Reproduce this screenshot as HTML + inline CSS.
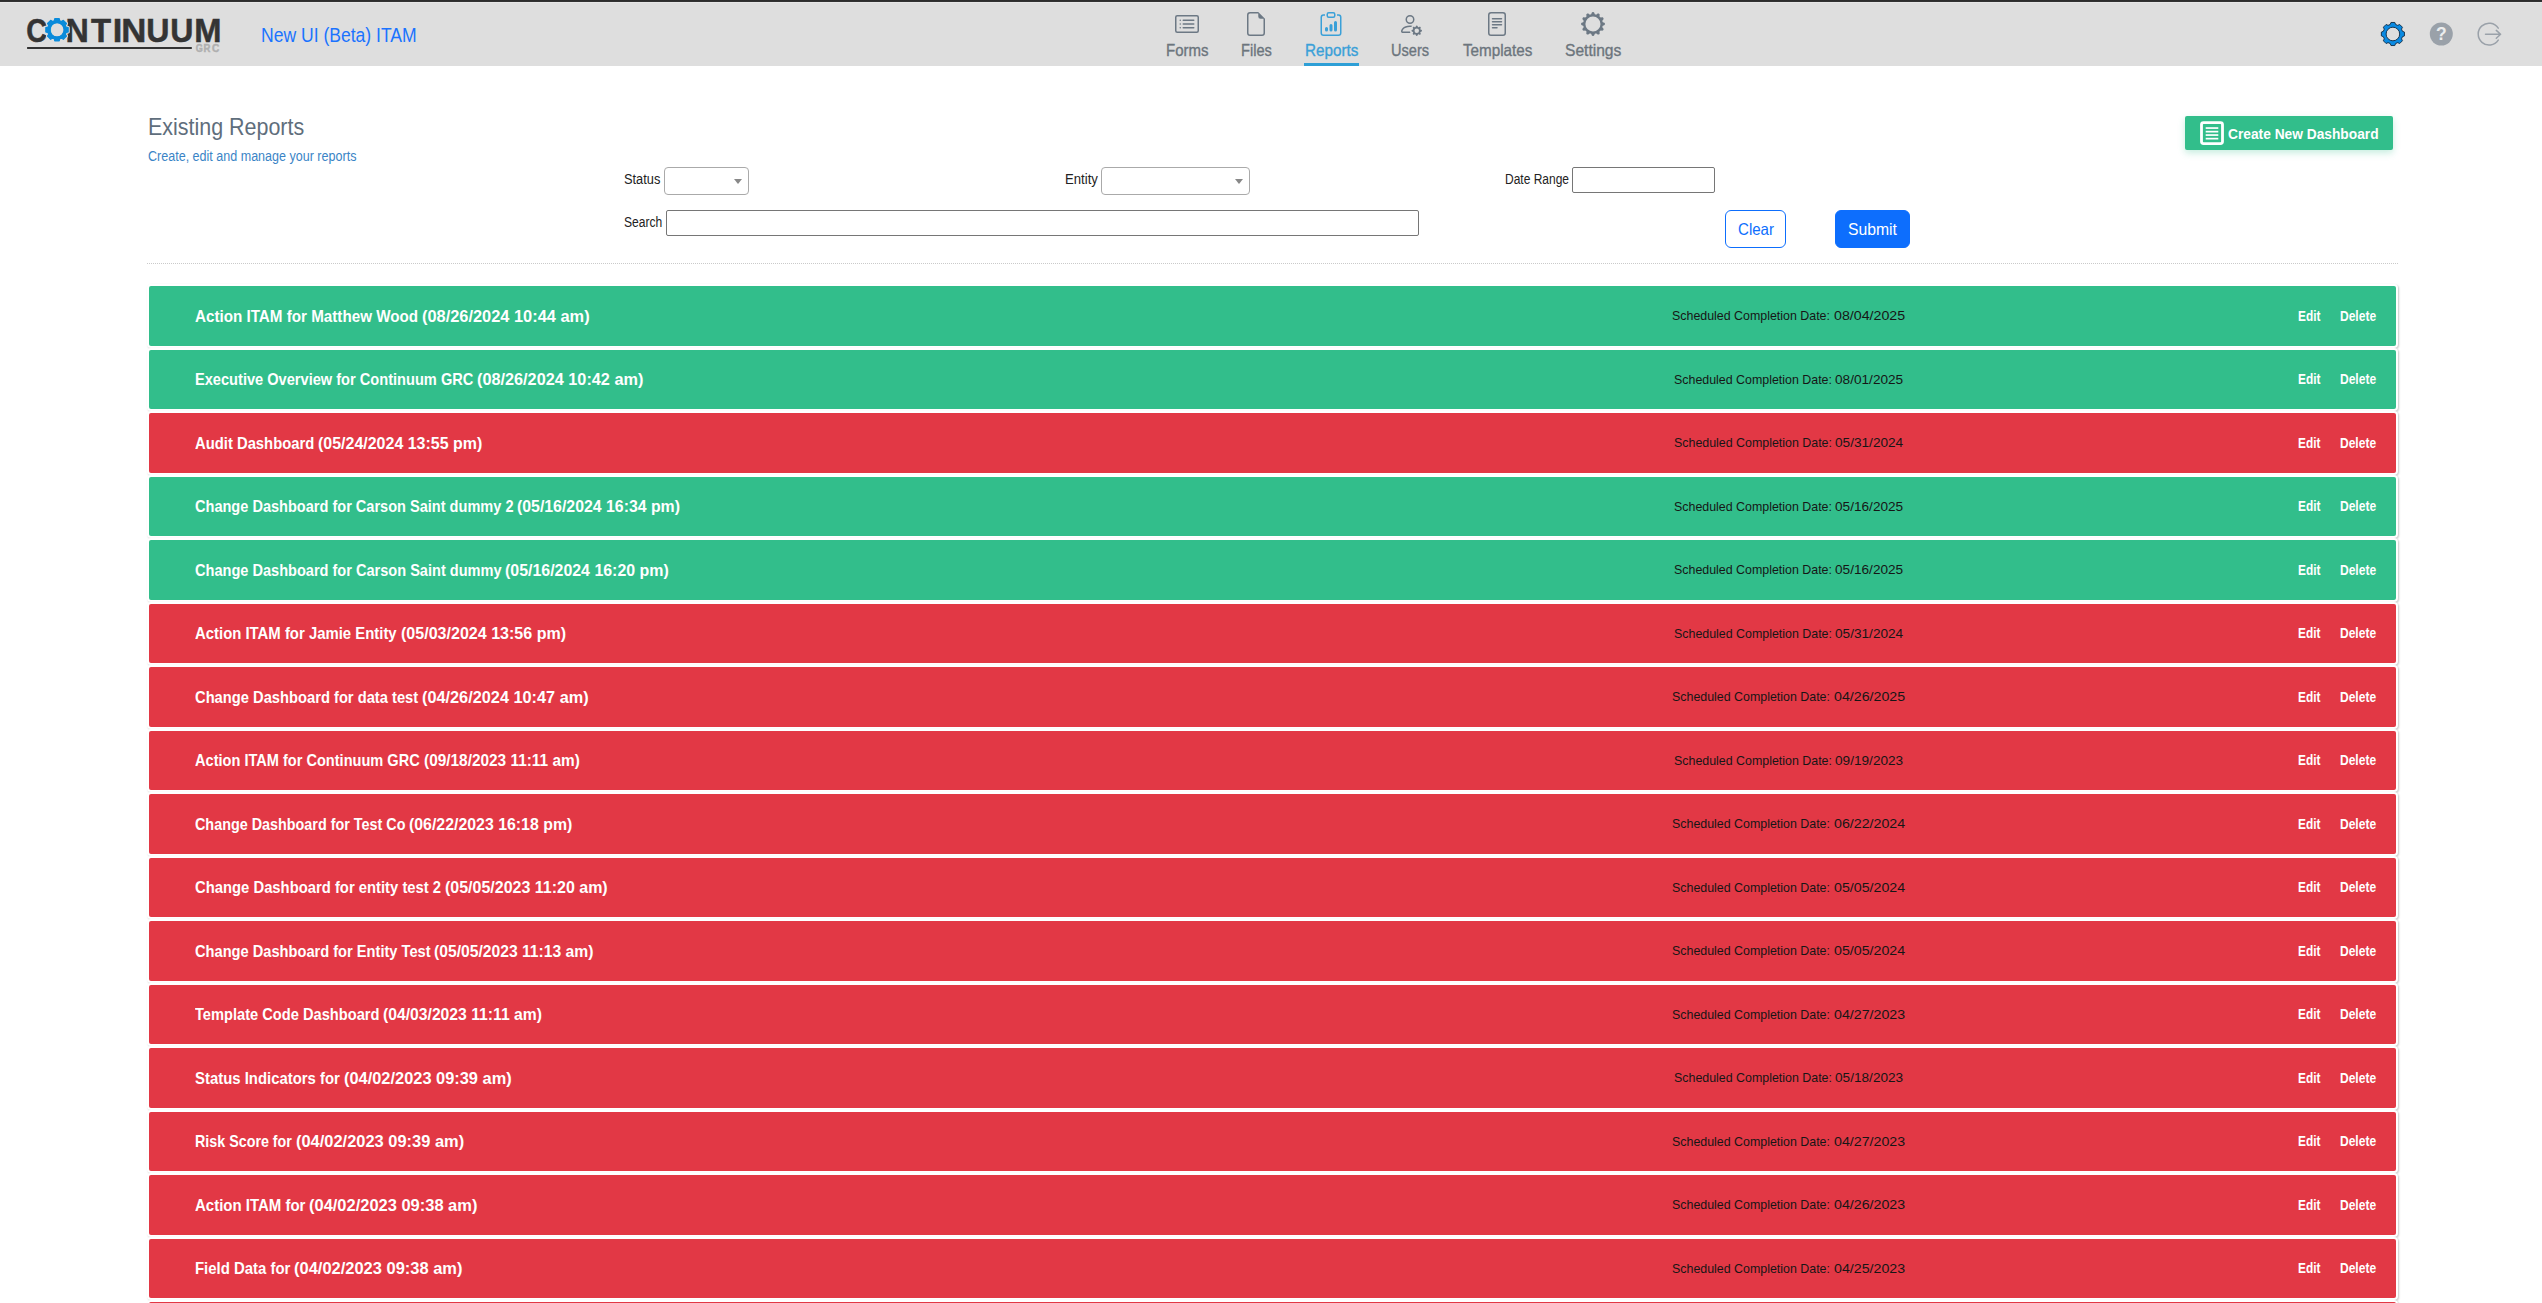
<!DOCTYPE html><html lang="en"><head><meta charset="utf-8"><title>Existing Reports</title><style>
*{box-sizing:border-box;margin:0;padding:0}
html,body{width:2542px;height:1303px;overflow:hidden;background:#fff}
body{font-family:"Liberation Sans",sans-serif;position:relative;color:#212529}
.abs{position:absolute;white-space:nowrap}
.f{position:absolute;white-space:pre;display:block;transform-origin:0 50%;margin:0;font-style:normal}
#topbar{left:0;top:0;width:2542px;height:2px;background:linear-gradient(#2a2a2a,#343434)}
#header{left:0;top:2px;width:2542px;height:64px;background:#dedede;box-shadow:inset 0 1px 0 #e6e6e6}
#main{left:0;top:66px;width:2542px;height:1237px}
.navico{top:10px;width:24px;height:24px;fill:#6c7884}
.sel{border:1px solid #aaa;border-radius:4px;background:#fff}
.sel:after{content:"";position:absolute;right:6px;top:11px;border:4px solid transparent;border-top:5px solid #888;border-bottom:0}
.inp{border:1px solid #767676;border-radius:2px;background:#fff}
.btn{border-radius:6px;border:1px solid #0d6efd}
#clear{left:1725px;top:144px;width:61px;height:38px;background:#fff}
#submit{left:1835px;top:144px;width:75px;height:38px;background:#0d6efd}
#create{left:2185px;top:50px;width:208px;height:34px;background:#32be8b;border-radius:2px;box-shadow:0 3px 7px rgba(50,190,139,.28)}
#dots{left:147px;top:197px;width:2251px;height:0;border-top:1px dotted #cacaca}
.card{left:147px;width:2251px;height:63.5px;border-radius:4px;background:#fff;box-shadow:1px 1px 2px rgba(0,0,0,.22)}
.row{left:149px;width:2247px;height:59.5px;border-radius:2px}
.g{background:#32be8b}
.r{background:#e23845}
</style></head><body>
<div id="topbar" class="abs"></div>
<header id="header" class="abs">
<svg class="abs" style="left:20px;top:3px" width="220" height="60" viewBox="0 0 220 60" font-family="'Liberation Sans',sans-serif" font-weight="700" role="img" aria-label="CONTINUUM GRC"><title>CONTINUUM GRC</title><text x="6.34" y="36.6" font-size="33.2" fill="#343434" stroke="#343434" stroke-width="0.5" textLength="20.84" lengthAdjust="spacingAndGlyphs">C</text><text x="45.61" y="36.6" font-size="33.2" fill="#343434" stroke="#343434" stroke-width="0.5" textLength="23.26" lengthAdjust="spacingAndGlyphs">N</text><text x="70.97" y="36.6" font-size="33.2" fill="#343434" stroke="#343434" stroke-width="0.5" textLength="20.06" lengthAdjust="spacingAndGlyphs">T</text><text x="92.69" y="36.6" font-size="33.2" fill="#343434" stroke="#343434" stroke-width="0.5" textLength="9.56" lengthAdjust="spacingAndGlyphs">I</text><text x="101.37" y="36.6" font-size="33.2" fill="#343434" stroke="#343434" stroke-width="0.5" textLength="25.09" lengthAdjust="spacingAndGlyphs">N</text><text x="126.13" y="36.6" font-size="33.2" fill="#343434" stroke="#343434" stroke-width="0.5" textLength="23.19" lengthAdjust="spacingAndGlyphs">U</text><text x="150.16" y="36.6" font-size="33.2" fill="#343434" stroke="#343434" stroke-width="0.5" textLength="23.18" lengthAdjust="spacingAndGlyphs">U</text><text x="174.14" y="36.6" font-size="33.2" fill="#343434" stroke="#343434" stroke-width="0.5" textLength="27.24" lengthAdjust="spacingAndGlyphs">M</text><path d="M34.24 15.82 L34.78 13.62 L39.22 13.62 L39.76 15.82 L41.40 16.49 L43.33 15.32 L46.48 18.47 L45.31 20.40 L45.98 22.04 L48.18 22.58 L48.18 27.02 L45.98 27.56 L45.31 29.20 L46.48 31.13 L43.33 34.28 L41.40 33.11 L39.76 33.78 L39.22 35.98 L34.78 35.98 L34.24 33.78 L32.60 33.11 L30.67 34.28 L27.52 31.13 L28.69 29.20 L28.02 27.56 L25.82 27.02 L25.82 22.58 L28.02 22.04 L28.69 20.40 L27.52 18.47 L30.67 15.32 L32.60 16.49Z" fill="none" stroke="#dedede" stroke-width="3.2" stroke-linejoin="round"/><text x="26.7" y="34.3" font-size="26.5" font-weight="400" fill="#0a8bdb">O</text><path d="M34.24 15.82 L34.78 13.62 L39.22 13.62 L39.76 15.82 L41.40 16.49 L43.33 15.32 L46.48 18.47 L45.31 20.40 L45.98 22.04 L48.18 22.58 L48.18 27.02 L45.98 27.56 L45.31 29.20 L46.48 31.13 L43.33 34.28 L41.40 33.11 L39.76 33.78 L39.22 35.98 L34.78 35.98 L34.24 33.78 L32.60 33.11 L30.67 34.28 L27.52 31.13 L28.69 29.20 L28.02 27.56 L25.82 27.02 L25.82 22.58 L28.02 22.04 L28.69 20.40 L27.52 18.47 L30.67 15.32 L32.60 16.49ZM29.85 24.80 a7.15 7.15 0 1 0 14.30 0 a7.15 7.15 0 1 0 -14.30 0Z" fill="#0a8bdb" fill-rule="evenodd" stroke="#0a8bdb" stroke-width="1.2" stroke-linejoin="round"/><rect x="7.1" y="42" width="164.7" height="2" fill="#333"/><text x="175.65" y="46.8" font-size="10.4" fill="#b0b0b0" stroke="#b0b0b0" stroke-width="0.45" textLength="7.10" lengthAdjust="spacingAndGlyphs">G</text><text x="183.55" y="46.8" font-size="10.4" fill="#b0b0b0" stroke="#b0b0b0" stroke-width="0.45" textLength="6.90" lengthAdjust="spacingAndGlyphs">R</text><text x="191.95" y="46.8" font-size="10.4" fill="#b0b0b0" stroke="#b0b0b0" stroke-width="0.45" textLength="7.30" lengthAdjust="spacingAndGlyphs">C</text></svg>
<span class="f" style="left:261.2px;top:21.0px;font-size:20.5px;font-weight:400;color:#1a73ff;line-height:24px;transform:scaleX(0.8561)">New UI (Beta) ITAM</span>
<nav>
<div class="navitem"><svg class="abs navico" viewBox="0 0 16 16" style="left:1174.8px"><path d="M14.5 3a.5.5 0 0 1 .5.5v9a.5.5 0 0 1-.5.5h-13a.5.5 0 0 1-.5-.5v-9a.5.5 0 0 1 .5-.5zm-13-1A1.5 1.5 0 0 0 0 3.5v9A1.5 1.5 0 0 0 1.5 14h13a1.5 1.5 0 0 0 1.5-1.5v-9A1.5 1.5 0 0 0 14.5 2z"/><path d="M5 8a.5.5 0 0 1 .5-.5h7a.5.5 0 0 1 0 1h-7A.5.5 0 0 1 5 8m0-2.5a.5.5 0 0 1 .5-.5h7a.5.5 0 0 1 0 1h-7a.5.5 0 0 1-.5-.5m0 5a.5.5 0 0 1 .5-.5h7a.5.5 0 0 1 0 1h-7a.5.5 0 0 1-.5-.5m-1-5a.5.5 0 1 1-1 0 .5.5 0 0 1 1 0M4 8a.5.5 0 1 1-1 0 .5.5 0 0 1 1 0m0 2.5a.5.5 0 1 1-1 0 .5.5 0 0 1 1 0"/></svg><span class="f" style="left:1165.5px;top:38.0px;font-size:16.5px;font-weight:400;color:#6c757d;line-height:20px;-webkit-text-stroke:0.35px #6c757d;transform:scaleX(0.9091)">Forms</span></div>
<div class="navitem"><svg class="abs navico" viewBox="0 0 16 16" style="left:1244.2px"><path d="M14 4.5V14a2 2 0 0 1-2 2H4a2 2 0 0 1-2-2V2a2 2 0 0 1 2-2h5.5zm-3 0A1.5 1.5 0 0 1 9.5 3V1H4a1 1 0 0 0-1 1v12a1 1 0 0 0 1 1h8a1 1 0 0 0 1-1V4.5z"/></svg><span class="f" style="left:1240.8px;top:38.0px;font-size:16.5px;font-weight:400;color:#6c757d;line-height:20px;-webkit-text-stroke:0.35px #6c757d;transform:scaleX(0.8839)">Files</span></div>
<div class="navitem active"><svg class="abs navico" viewBox="0 0 16 16" style="left:1319.4px;fill:#3aa0d8"><path d="M4 11a1 1 0 1 1 2 0v1a1 1 0 1 1-2 0zm6-4a1 1 0 1 1 2 0v5a1 1 0 1 1-2 0zM7 9a1 1 0 0 1 2 0v3a1 1 0 1 1-2 0z"/><path d="M4 1.5H3a2 2 0 0 0-2 2V14a2 2 0 0 0 2 2h10a2 2 0 0 0 2-2V3.5a2 2 0 0 0-2-2h-1v1h1a1 1 0 0 1 1 1V14a1 1 0 0 1-1 1H3a1 1 0 0 1-1-1V3.5a1 1 0 0 1 1-1h1z"/><path d="M9.5 1a.5.5 0 0 1 .5.5v1a.5.5 0 0 1-.5.5h-3a.5.5 0 0 1-.5-.5v-1a.5.5 0 0 1 .5-.5zm-3-1A1.5 1.5 0 0 0 5 1.5v1A1.5 1.5 0 0 0 6.5 4h3A1.5 1.5 0 0 0 11 2.5v-1A1.5 1.5 0 0 0 9.5 0z"/></svg><span class="f" style="left:1304.7px;top:38.0px;font-size:16.5px;font-weight:400;color:#3aa0d8;line-height:20px;-webkit-text-stroke:0.35px #3aa0d8;transform:scaleX(0.9242)">Reports</span></div>
<div class="navitem"><svg class="abs navico" viewBox="0 0 16 16" style="left:1398.2px"><path d="M11 5a3 3 0 1 1-6 0 3 3 0 0 1 6 0M8 7a2 2 0 1 0 0-4 2 2 0 0 0 0 4m.256 7a4.5 4.5 0 0 1-.229-1.004H3c.001-.246.154-.986.832-1.664C4.484 10.68 5.711 10 8 10q.39 0 .74.025c.226-.341.496-.65.804-.918Q8.844 9.002 8 9c-5 0-6 3-6 4s1 1 1 1zm3.63-4.54c.18-.613 1.048-.613 1.229 0l.043.148a.64.64 0 0 0 .921.382l.136-.074c.561-.306 1.175.308.87.869l-.075.136a.64.64 0 0 0 .382.92l.149.045c.612.18.612 1.048 0 1.229l-.15.043a.64.64 0 0 0-.38.921l.074.136c.305.561-.309 1.175-.87.87l-.136-.075a.64.64 0 0 0-.92.382l-.045.149c-.18.612-1.048.612-1.229 0l-.043-.15a.64.64 0 0 0-.921-.38l-.136.074c-.561.305-1.175-.309-.87-.87l.075-.136a.64.64 0 0 0-.382-.92l-.148-.045c-.613-.18-.613-1.048 0-1.229l.148-.043a.64.64 0 0 0 .382-.921l-.074-.136c-.306-.561.308-1.175.869-.87l.136.075a.64.64 0 0 0 .92-.382zM14 12.5a1.5 1.5 0 1 0-3 0 1.5 1.5 0 0 0 3 0"/></svg><span class="f" style="left:1391.1px;top:38.0px;font-size:16.5px;font-weight:400;color:#6c757d;line-height:20px;-webkit-text-stroke:0.35px #6c757d;transform:scaleX(0.8841)">Users</span></div>
<div class="navitem"><svg class="abs navico" viewBox="0 0 16 16" style="left:1485.3px"><path d="M5 4a.5.5 0 0 0 0 1h6a.5.5 0 0 0 0-1zm-.5 2.5A.5.5 0 0 1 5 6h6a.5.5 0 0 1 0 1H5a.5.5 0 0 1-.5-.5M5 8a.5.5 0 0 0 0 1h6a.5.5 0 0 0 0-1zm0 2a.5.5 0 0 0 0 1h3a.5.5 0 0 0 0-1z"/><path d="M2 2a2 2 0 0 1 2-2h8a2 2 0 0 1 2 2v12a2 2 0 0 1-2 2H4a2 2 0 0 1-2-2zm10-1H4a1 1 0 0 0-1 1v12a1 1 0 0 0 1 1h8a1 1 0 0 0 1-1V2a1 1 0 0 0-1-1"/></svg><span class="f" style="left:1462.6px;top:38.0px;font-size:16.5px;font-weight:400;color:#6c757d;line-height:20px;-webkit-text-stroke:0.35px #6c757d;transform:scaleX(0.9228)">Templates</span></div>
<div class="navitem"><svg class="abs navico" viewBox="0 0 16 16" style="left:1581.1px"><path d="M8.932.727c-.243-.97-1.62-.97-1.864 0l-.071.286a.96.96 0 0 1-1.622.434l-.205-.211c-.695-.719-1.888-.03-1.613.931l.08.284a.96.96 0 0 1-1.186 1.187l-.284-.081c-.96-.275-1.65.918-.931 1.613l.211.205a.96.96 0 0 1-.434 1.622l-.286.071c-.97.243-.97 1.62 0 1.864l.286.071a.96.96 0 0 1 .434 1.622l-.211.205c-.719.695-.03 1.888.931 1.613l.284-.08a.96.96 0 0 1 1.187 1.187l-.081.283c-.275.96.918 1.65 1.613.931l.205-.211a.96.96 0 0 1 1.622.434l.071.286c.243.97 1.62.97 1.864 0l.071-.286a.96.96 0 0 1 1.622-.434l.205.211c.695.719 1.888.03 1.613-.931l-.08-.284a.96.96 0 0 1 1.187-1.187l.283.081c.96.275 1.65-.918.931-1.613l-.211-.205a.96.96 0 0 1 .434-1.622l.286-.071c.97-.243.97-1.62 0-1.864l-.286-.071a.96.96 0 0 1-.434-1.622l.211-.205c.719-.695.03-1.888-.931-1.613l-.284.08a.96.96 0 0 1-1.187-1.186l.081-.284c.275-.96-.918-1.65-1.613-.931l-.205.211a.96.96 0 0 1-1.622-.434zM8 12.997a4.998 4.998 0 1 1 0-9.995 4.998 4.998 0 0 1 0 9.996z"/></svg><span class="f" style="left:1564.9px;top:38.0px;font-size:16.5px;font-weight:400;color:#6c757d;line-height:20px;-webkit-text-stroke:0.35px #6c757d;transform:scaleX(0.9442)">Settings</span></div>
<div class="abs" style="left:1304px;top:61px;width:54.5px;height:3px;background:#2e9fd6"></div>
</nav>
<svg class="abs" style="left:2370px;top:12px" width="140" height="40" viewBox="2370 14 140 40"><path d="M2390.21 24.47 L2390.98 22.46 L2394.82 22.46 L2395.59 24.47 L2397.74 25.36 L2399.70 24.48 L2402.42 27.20 L2401.54 29.16 L2402.43 31.31 L2404.44 32.08 L2404.44 35.92 L2402.43 36.69 L2401.54 38.84 L2402.42 40.80 L2399.70 43.52 L2397.74 42.64 L2395.59 43.53 L2394.82 45.54 L2390.98 45.54 L2390.21 43.53 L2388.06 42.64 L2386.10 43.52 L2383.38 40.80 L2384.26 38.84 L2383.37 36.69 L2381.36 35.92 L2381.36 32.08 L2383.37 31.31 L2384.26 29.16 L2383.38 27.20 L2386.10 24.48 L2388.06 25.36ZM2386.10 34.00 a6.80 6.80 0 1 0 13.60 0 a6.80 6.80 0 1 0 -13.60 0Z" fill="#0a8ae2" fill-rule="evenodd" stroke="#0f2a44" stroke-width="0.9" stroke-linejoin="round"/><circle cx="2441.3" cy="34" r="11.5" fill="#9aa1a9"/><text x="2441.3" y="40.2" font-size="17.5" font-weight="700" font-family="'Liberation Sans',sans-serif" fill="#eceded" text-anchor="middle">?</text><path d="M2498.24 28.16 A10.90 10.90 0 1 0 2498.24 40.04" fill="none" stroke="#9aa1a9" stroke-width="1.5" stroke-linecap="round"/><path d="M2485.5 34.3H2500.4M2496.3 30.4L2500.6 34.3L2496.3 38.2" fill="none" stroke="#9aa1a9" stroke-width="1.5" stroke-linecap="round" stroke-linejoin="round"/></svg>
</header>
<main id="main" class="abs">
<h1 class="f" style="left:148.1px;top:46.7px;font-size:24px;font-weight:400;color:#5f6e7c;line-height:28px;transform:scaleX(0.8938)">Existing Reports</h1><p class="f" style="left:148.0px;top:82.0px;font-size:14px;font-weight:400;color:#3a84c6;line-height:16px;transform:scaleX(0.8956)">Create, edit and manage your reports</p><label class="f" style="left:624.4px;top:105.0px;font-size:14px;font-weight:400;color:#222;line-height:16px;transform:scaleX(0.9143)">Status</label><label class="f" style="left:1064.8px;top:105.0px;font-size:14px;font-weight:400;color:#222;line-height:16px;transform:scaleX(0.9396)">Entity</label><label class="f" style="left:1505.0px;top:105.0px;font-size:14px;font-weight:400;color:#222;line-height:16px;transform:scaleX(0.8565)">Date Range</label><label class="f" style="left:624.4px;top:148.0px;font-size:14px;font-weight:400;color:#222;line-height:16px;transform:scaleX(0.8634)">Search</label>
<div class="abs sel" style="left:664px;top:101px;width:85px;height:27.5px"></div>
<div class="abs sel" style="left:1101px;top:101px;width:148.5px;height:27.5px"></div>
<div class="abs inp" style="left:1572px;top:101px;width:143px;height:25.5px"></div>
<div class="abs inp" style="left:666px;top:144px;width:753px;height:25.5px"></div>
<div id="clear" class="abs btn"><span class="f" style="left:11.5px;top:6.0px;font-size:16.5px;font-weight:400;color:#0d6efd;line-height:24px;transform:scaleX(0.9128)">Clear</span></div><div id="submit" class="abs btn"><span class="f" style="left:12.0px;top:6.0px;font-size:16.5px;font-weight:400;color:#fff;line-height:24px;transform:scaleX(0.9541)">Submit</span></div>
<div id="create" class="abs"><svg class="abs" style="left:14px;top:4px" width="26" height="26" viewBox="2199 120 26 26"><rect x="2201.5" y="122.6" width="21" height="21" rx="2" fill="none" stroke="#fff" stroke-width="2.8"/><rect x="2205.7" y="127.2" width="12.6" height="1.7" fill="#fff"/><rect x="2205.7" y="130.8" width="12.6" height="1.7" fill="#fff"/><rect x="2205.7" y="134.2" width="12.6" height="1.7" fill="#fff"/><rect x="2205.7" y="137.8" width="12.6" height="1.7" fill="#fff"/></svg><span class="f" style="left:42.6px;top:7.5px;font-size:15.5px;font-weight:700;color:#fff;line-height:20px;transform:scaleX(0.8874)">Create New Dashboard</span></div>
<div id="dots" class="abs"></div>
<div id="list">
<div class="abs card" style="top:218.0px"></div>
<div class="abs row g" style="top:220.0px"><span class="f" style="left:45.7px;top:20.5px;font-size:17px;font-weight:700;color:#fff;line-height:20px;transform:scaleX(0.8937)">Action ITAM for Matthew Wood </span><span class="f" style="left:273.0px;top:20.5px;font-size:17px;font-weight:700;color:#fff;line-height:20px;transform:scaleX(0.9637)">(08/26/2024 10:44 am)</span><span class="f" style="left:1523.4px;top:22.1px;font-size:13.6px;font-weight:400;color:#161616;line-height:16px;transform:scaleX(0.9128)">Scheduled Completion Date: </span><span class="f" style="left:1684.8px;top:22.1px;font-size:13.6px;font-weight:400;color:#161616;line-height:16px;transform:scaleX(1.0463)">08/04/2025</span><span class="f" style="left:2148.5px;top:21.8px;font-size:14px;font-weight:700;color:#fff;line-height:16px;transform:scaleX(0.8468)">Edit</span><span class="f" style="left:2190.7px;top:21.8px;font-size:14px;font-weight:700;color:#fff;line-height:16px;transform:scaleX(0.8589)">Delete</span></div>
<div class="abs card" style="top:281.5px"></div>
<div class="abs row g" style="top:283.5px"><span class="f" style="left:45.7px;top:20.5px;font-size:17px;font-weight:700;color:#fff;line-height:20px;transform:scaleX(0.8590)">Executive Overview for Continuum GRC </span><span class="f" style="left:328.1px;top:20.5px;font-size:17px;font-weight:700;color:#fff;line-height:20px;transform:scaleX(0.9563)">(08/26/2024 10:42 am)</span><span class="f" style="left:1524.9px;top:22.1px;font-size:13.6px;font-weight:400;color:#161616;line-height:16px;transform:scaleX(0.9128)">Scheduled Completion Date: </span><span class="f" style="left:1686.3px;top:22.1px;font-size:13.6px;font-weight:400;color:#161616;line-height:16px;transform:scaleX(1.0023)">08/01/2025</span><span class="f" style="left:2148.5px;top:21.8px;font-size:14px;font-weight:700;color:#fff;line-height:16px;transform:scaleX(0.8468)">Edit</span><span class="f" style="left:2190.7px;top:21.8px;font-size:14px;font-weight:700;color:#fff;line-height:16px;transform:scaleX(0.8589)">Delete</span></div>
<div class="abs card" style="top:345.0px"></div>
<div class="abs row r" style="top:347.0px"><span class="f" style="left:45.7px;top:20.5px;font-size:17px;font-weight:700;color:#fff;line-height:20px;transform:scaleX(0.8710)">Audit Dashboard </span><span class="f" style="left:169.1px;top:20.5px;font-size:17px;font-weight:700;color:#fff;line-height:20px;transform:scaleX(0.9397)">(05/24/2024 13:55 pm)</span><span class="f" style="left:1524.9px;top:22.1px;font-size:13.6px;font-weight:400;color:#161616;line-height:16px;transform:scaleX(0.9128)">Scheduled Completion Date: </span><span class="f" style="left:1686.3px;top:22.1px;font-size:13.6px;font-weight:400;color:#161616;line-height:16px;transform:scaleX(1.0023)">05/31/2024</span><span class="f" style="left:2148.5px;top:21.8px;font-size:14px;font-weight:700;color:#fff;line-height:16px;transform:scaleX(0.8468)">Edit</span><span class="f" style="left:2190.7px;top:21.8px;font-size:14px;font-weight:700;color:#fff;line-height:16px;transform:scaleX(0.8589)">Delete</span></div>
<div class="abs card" style="top:408.5px"></div>
<div class="abs row g" style="top:410.5px"><span class="f" style="left:45.7px;top:20.5px;font-size:17px;font-weight:700;color:#fff;line-height:20px;transform:scaleX(0.8557)">Change Dashboard for Carson Saint dummy 2 </span><span class="f" style="left:368.2px;top:20.5px;font-size:17px;font-weight:700;color:#fff;line-height:20px;transform:scaleX(0.9323)">(05/16/2024 16:34 pm)</span><span class="f" style="left:1524.9px;top:22.1px;font-size:13.6px;font-weight:400;color:#161616;line-height:16px;transform:scaleX(0.9128)">Scheduled Completion Date: </span><span class="f" style="left:1686.3px;top:22.1px;font-size:13.6px;font-weight:400;color:#161616;line-height:16px;transform:scaleX(1.0023)">05/16/2025</span><span class="f" style="left:2148.5px;top:21.8px;font-size:14px;font-weight:700;color:#fff;line-height:16px;transform:scaleX(0.8468)">Edit</span><span class="f" style="left:2190.7px;top:21.8px;font-size:14px;font-weight:700;color:#fff;line-height:16px;transform:scaleX(0.8589)">Delete</span></div>
<div class="abs card" style="top:472.0px"></div>
<div class="abs row g" style="top:474.0px"><span class="f" style="left:45.7px;top:20.5px;font-size:17px;font-weight:700;color:#fff;line-height:20px;transform:scaleX(0.8563)">Change Dashboard for Carson Saint dummy </span><span class="f" style="left:356.3px;top:20.5px;font-size:17px;font-weight:700;color:#fff;line-height:20px;transform:scaleX(0.9363)">(05/16/2024 16:20 pm)</span><span class="f" style="left:1524.9px;top:22.1px;font-size:13.6px;font-weight:400;color:#161616;line-height:16px;transform:scaleX(0.9128)">Scheduled Completion Date: </span><span class="f" style="left:1686.3px;top:22.1px;font-size:13.6px;font-weight:400;color:#161616;line-height:16px;transform:scaleX(1.0023)">05/16/2025</span><span class="f" style="left:2148.5px;top:21.8px;font-size:14px;font-weight:700;color:#fff;line-height:16px;transform:scaleX(0.8468)">Edit</span><span class="f" style="left:2190.7px;top:21.8px;font-size:14px;font-weight:700;color:#fff;line-height:16px;transform:scaleX(0.8589)">Delete</span></div>
<div class="abs card" style="top:535.5px"></div>
<div class="abs row r" style="top:537.5px"><span class="f" style="left:45.7px;top:20.5px;font-size:17px;font-weight:700;color:#fff;line-height:20px;transform:scaleX(0.8762)">Action ITAM for Jamie Entity </span><span class="f" style="left:251.5px;top:20.5px;font-size:17px;font-weight:700;color:#fff;line-height:20px;transform:scaleX(0.9443)">(05/03/2024 13:56 pm)</span><span class="f" style="left:1524.9px;top:22.1px;font-size:13.6px;font-weight:400;color:#161616;line-height:16px;transform:scaleX(0.9128)">Scheduled Completion Date: </span><span class="f" style="left:1686.3px;top:22.1px;font-size:13.6px;font-weight:400;color:#161616;line-height:16px;transform:scaleX(1.0023)">05/31/2024</span><span class="f" style="left:2148.5px;top:21.8px;font-size:14px;font-weight:700;color:#fff;line-height:16px;transform:scaleX(0.8468)">Edit</span><span class="f" style="left:2190.7px;top:21.8px;font-size:14px;font-weight:700;color:#fff;line-height:16px;transform:scaleX(0.8589)">Delete</span></div>
<div class="abs card" style="top:599.0px"></div>
<div class="abs row r" style="top:601.0px"><span class="f" style="left:45.7px;top:20.5px;font-size:17px;font-weight:700;color:#fff;line-height:20px;transform:scaleX(0.8655)">Change Dashboard for data test </span><span class="f" style="left:273.0px;top:20.5px;font-size:17px;font-weight:700;color:#fff;line-height:20px;transform:scaleX(0.9580)">(04/26/2024 10:47 am)</span><span class="f" style="left:1523.4px;top:22.1px;font-size:13.6px;font-weight:400;color:#161616;line-height:16px;transform:scaleX(0.9128)">Scheduled Completion Date: </span><span class="f" style="left:1684.8px;top:22.1px;font-size:13.6px;font-weight:400;color:#161616;line-height:16px;transform:scaleX(1.0463)">04/26/2025</span><span class="f" style="left:2148.5px;top:21.8px;font-size:14px;font-weight:700;color:#fff;line-height:16px;transform:scaleX(0.8468)">Edit</span><span class="f" style="left:2190.7px;top:21.8px;font-size:14px;font-weight:700;color:#fff;line-height:16px;transform:scaleX(0.8589)">Delete</span></div>
<div class="abs card" style="top:662.5px"></div>
<div class="abs row r" style="top:664.5px"><span class="f" style="left:45.7px;top:20.5px;font-size:17px;font-weight:700;color:#fff;line-height:20px;transform:scaleX(0.8572)">Action ITAM for Continuum GRC </span><span class="f" style="left:274.5px;top:20.5px;font-size:17px;font-weight:700;color:#fff;line-height:20px;transform:scaleX(0.9056)">(09/18/2023 11:11 am)</span><span class="f" style="left:1524.9px;top:22.1px;font-size:13.6px;font-weight:400;color:#161616;line-height:16px;transform:scaleX(0.9128)">Scheduled Completion Date: </span><span class="f" style="left:1686.3px;top:22.1px;font-size:13.6px;font-weight:400;color:#161616;line-height:16px;transform:scaleX(1.0023)">09/19/2023</span><span class="f" style="left:2148.5px;top:21.8px;font-size:14px;font-weight:700;color:#fff;line-height:16px;transform:scaleX(0.8468)">Edit</span><span class="f" style="left:2190.7px;top:21.8px;font-size:14px;font-weight:700;color:#fff;line-height:16px;transform:scaleX(0.8589)">Delete</span></div>
<div class="abs card" style="top:726.0px"></div>
<div class="abs row r" style="top:728.0px"><span class="f" style="left:45.7px;top:20.5px;font-size:17px;font-weight:700;color:#fff;line-height:20px;transform:scaleX(0.8449)">Change Dashboard for Test Co </span><span class="f" style="left:260.1px;top:20.5px;font-size:17px;font-weight:700;color:#fff;line-height:20px;transform:scaleX(0.9340)">(06/22/2023 16:18 pm)</span><span class="f" style="left:1523.4px;top:22.1px;font-size:13.6px;font-weight:400;color:#161616;line-height:16px;transform:scaleX(0.9128)">Scheduled Completion Date: </span><span class="f" style="left:1684.8px;top:22.1px;font-size:13.6px;font-weight:400;color:#161616;line-height:16px;transform:scaleX(1.0463)">06/22/2024</span><span class="f" style="left:2148.5px;top:21.8px;font-size:14px;font-weight:700;color:#fff;line-height:16px;transform:scaleX(0.8468)">Edit</span><span class="f" style="left:2190.7px;top:21.8px;font-size:14px;font-weight:700;color:#fff;line-height:16px;transform:scaleX(0.8589)">Delete</span></div>
<div class="abs card" style="top:789.5px"></div>
<div class="abs row r" style="top:791.5px"><span class="f" style="left:45.7px;top:20.5px;font-size:17px;font-weight:700;color:#fff;line-height:20px;transform:scaleX(0.8713)">Change Dashboard for entity test 2 </span><span class="f" style="left:295.9px;top:20.5px;font-size:17px;font-weight:700;color:#fff;line-height:20px;transform:scaleX(0.9406)">(05/05/2023 11:20 am)</span><span class="f" style="left:1523.4px;top:22.1px;font-size:13.6px;font-weight:400;color:#161616;line-height:16px;transform:scaleX(0.9128)">Scheduled Completion Date: </span><span class="f" style="left:1684.8px;top:22.1px;font-size:13.6px;font-weight:400;color:#161616;line-height:16px;transform:scaleX(1.0463)">05/05/2024</span><span class="f" style="left:2148.5px;top:21.8px;font-size:14px;font-weight:700;color:#fff;line-height:16px;transform:scaleX(0.8468)">Edit</span><span class="f" style="left:2190.7px;top:21.8px;font-size:14px;font-weight:700;color:#fff;line-height:16px;transform:scaleX(0.8589)">Delete</span></div>
<div class="abs card" style="top:853.0px"></div>
<div class="abs row r" style="top:855.0px"><span class="f" style="left:45.7px;top:20.5px;font-size:17px;font-weight:700;color:#fff;line-height:20px;transform:scaleX(0.8609)">Change Dashboard for Entity Test </span><span class="f" style="left:285.3px;top:20.5px;font-size:17px;font-weight:700;color:#fff;line-height:20px;transform:scaleX(0.9216)">(05/05/2023 11:13 am)</span><span class="f" style="left:1523.4px;top:22.1px;font-size:13.6px;font-weight:400;color:#161616;line-height:16px;transform:scaleX(0.9128)">Scheduled Completion Date: </span><span class="f" style="left:1684.8px;top:22.1px;font-size:13.6px;font-weight:400;color:#161616;line-height:16px;transform:scaleX(1.0463)">05/05/2024</span><span class="f" style="left:2148.5px;top:21.8px;font-size:14px;font-weight:700;color:#fff;line-height:16px;transform:scaleX(0.8468)">Edit</span><span class="f" style="left:2190.7px;top:21.8px;font-size:14px;font-weight:700;color:#fff;line-height:16px;transform:scaleX(0.8589)">Delete</span></div>
<div class="abs card" style="top:916.5px"></div>
<div class="abs row r" style="top:918.5px"><span class="f" style="left:45.7px;top:20.5px;font-size:17px;font-weight:700;color:#fff;line-height:20px;transform:scaleX(0.8613)">Template Code Dashboard </span><span class="f" style="left:234.2px;top:20.5px;font-size:17px;font-weight:700;color:#fff;line-height:20px;transform:scaleX(0.9237)">(04/03/2023 11:11 am)</span><span class="f" style="left:1523.4px;top:22.1px;font-size:13.6px;font-weight:400;color:#161616;line-height:16px;transform:scaleX(0.9128)">Scheduled Completion Date: </span><span class="f" style="left:1684.8px;top:22.1px;font-size:13.6px;font-weight:400;color:#161616;line-height:16px;transform:scaleX(1.0463)">04/27/2023</span><span class="f" style="left:2148.5px;top:21.8px;font-size:14px;font-weight:700;color:#fff;line-height:16px;transform:scaleX(0.8468)">Edit</span><span class="f" style="left:2190.7px;top:21.8px;font-size:14px;font-weight:700;color:#fff;line-height:16px;transform:scaleX(0.8589)">Delete</span></div>
<div class="abs card" style="top:980.0px"></div>
<div class="abs row r" style="top:982.0px"><span class="f" style="left:45.7px;top:20.5px;font-size:17px;font-weight:700;color:#fff;line-height:20px;transform:scaleX(0.8763)">Status Indicators for </span><span class="f" style="left:194.7px;top:20.5px;font-size:17px;font-weight:700;color:#fff;line-height:20px;transform:scaleX(0.9643)">(04/02/2023 09:39 am)</span><span class="f" style="left:1524.9px;top:22.1px;font-size:13.6px;font-weight:400;color:#161616;line-height:16px;transform:scaleX(0.9128)">Scheduled Completion Date: </span><span class="f" style="left:1686.3px;top:22.1px;font-size:13.6px;font-weight:400;color:#161616;line-height:16px;transform:scaleX(1.0023)">05/18/2023</span><span class="f" style="left:2148.5px;top:21.8px;font-size:14px;font-weight:700;color:#fff;line-height:16px;transform:scaleX(0.8468)">Edit</span><span class="f" style="left:2190.7px;top:21.8px;font-size:14px;font-weight:700;color:#fff;line-height:16px;transform:scaleX(0.8589)">Delete</span></div>
<div class="abs card" style="top:1043.5px"></div>
<div class="abs row r" style="top:1045.5px"><span class="f" style="left:45.7px;top:20.5px;font-size:17px;font-weight:700;color:#fff;line-height:20px;transform:scaleX(0.8408)">Risk Score for </span><span class="f" style="left:146.6px;top:20.5px;font-size:17px;font-weight:700;color:#fff;line-height:20px;transform:scaleX(0.9672)">(04/02/2023 09:39 am)</span><span class="f" style="left:1523.4px;top:22.1px;font-size:13.6px;font-weight:400;color:#161616;line-height:16px;transform:scaleX(0.9128)">Scheduled Completion Date: </span><span class="f" style="left:1684.8px;top:22.1px;font-size:13.6px;font-weight:400;color:#161616;line-height:16px;transform:scaleX(1.0463)">04/27/2023</span><span class="f" style="left:2148.5px;top:21.8px;font-size:14px;font-weight:700;color:#fff;line-height:16px;transform:scaleX(0.8468)">Edit</span><span class="f" style="left:2190.7px;top:21.8px;font-size:14px;font-weight:700;color:#fff;line-height:16px;transform:scaleX(0.8589)">Delete</span></div>
<div class="abs card" style="top:1107.0px"></div>
<div class="abs row r" style="top:1109.0px"><span class="f" style="left:45.7px;top:20.5px;font-size:17px;font-weight:700;color:#fff;line-height:20px;transform:scaleX(0.8815)">Action ITAM for </span><span class="f" style="left:160.3px;top:20.5px;font-size:17px;font-weight:700;color:#fff;line-height:20px;transform:scaleX(0.9683)">(04/02/2023 09:38 am)</span><span class="f" style="left:1523.4px;top:22.1px;font-size:13.6px;font-weight:400;color:#161616;line-height:16px;transform:scaleX(0.9128)">Scheduled Completion Date: </span><span class="f" style="left:1684.8px;top:22.1px;font-size:13.6px;font-weight:400;color:#161616;line-height:16px;transform:scaleX(1.0463)">04/26/2023</span><span class="f" style="left:2148.5px;top:21.8px;font-size:14px;font-weight:700;color:#fff;line-height:16px;transform:scaleX(0.8468)">Edit</span><span class="f" style="left:2190.7px;top:21.8px;font-size:14px;font-weight:700;color:#fff;line-height:16px;transform:scaleX(0.8589)">Delete</span></div>
<div class="abs card" style="top:1170.5px"></div>
<div class="abs row r" style="top:1172.5px"><span class="f" style="left:45.7px;top:20.5px;font-size:17px;font-weight:700;color:#fff;line-height:20px;transform:scaleX(0.8777)">Field Data for </span><span class="f" style="left:145.2px;top:20.5px;font-size:17px;font-weight:700;color:#fff;line-height:20px;transform:scaleX(0.9689)">(04/02/2023 09:38 am)</span><span class="f" style="left:1523.4px;top:22.1px;font-size:13.6px;font-weight:400;color:#161616;line-height:16px;transform:scaleX(0.9128)">Scheduled Completion Date: </span><span class="f" style="left:1684.8px;top:22.1px;font-size:13.6px;font-weight:400;color:#161616;line-height:16px;transform:scaleX(1.0463)">04/25/2023</span><span class="f" style="left:2148.5px;top:21.8px;font-size:14px;font-weight:700;color:#fff;line-height:16px;transform:scaleX(0.8468)">Edit</span><span class="f" style="left:2190.7px;top:21.8px;font-size:14px;font-weight:700;color:#fff;line-height:16px;transform:scaleX(0.8589)">Delete</span></div>
<div class="abs card" style="top:1234.0px"></div>
<div class="abs row r" style="top:1236.0px"><span class="f" style="left:45.7px;top:20.5px;font-size:17px;font-weight:700;color:#fff;line-height:20px;transform:scaleX(0.8553)">Form Status for </span><span class="f" style="left:158.0px;top:20.5px;font-size:17px;font-weight:700;color:#fff;line-height:20px;transform:scaleX(0.9632)">(04/02/2023 09:37 am)</span><span class="f" style="left:1523.4px;top:22.1px;font-size:13.6px;font-weight:400;color:#161616;line-height:16px;transform:scaleX(0.9128)">Scheduled Completion Date: </span><span class="f" style="left:1684.8px;top:22.1px;font-size:13.6px;font-weight:400;color:#161616;line-height:16px;transform:scaleX(1.0463)">04/24/2023</span><span class="f" style="left:2148.5px;top:21.8px;font-size:14px;font-weight:700;color:#fff;line-height:16px;transform:scaleX(0.8468)">Edit</span><span class="f" style="left:2190.7px;top:21.8px;font-size:14px;font-weight:700;color:#fff;line-height:16px;transform:scaleX(0.8589)">Delete</span></div>
</div>
</main>
</body></html>
